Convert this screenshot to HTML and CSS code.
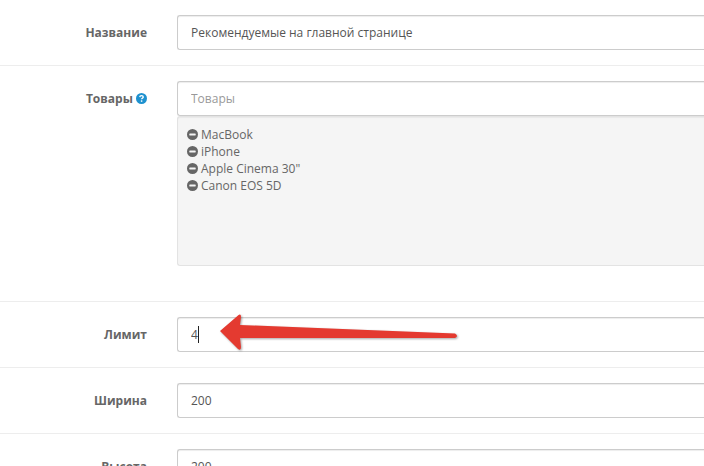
FILE: index.html
```html
<!DOCTYPE html>
<html lang="ru">
<head>
<meta charset="UTF-8">
<meta name="viewport" content="width=device-width, initial-scale=1.0">
<title>Рекомендуемые</title>
<link rel="stylesheet" href="styles.css">
</head>
<body>
<svg class="sprite" aria-hidden="true">
  <symbol id="minus" viewBox="0 0 12 12">
    <circle cx="6" cy="6" r="6" fill="currentColor"/>
    <rect x="2.5" y="4.9" width="7" height="2.2" rx="0.5" fill="#f5f5f5"/>
  </symbol>
</svg>
<form class="form">
  <div class="form-group">
    <label class="control-label" for="name">Название</label>
    <div class="field">
      <input class="form-control" type="text" id="name" name="name" value="Рекомендуемые на главной странице">
    </div>
  </div>
  <div class="form-group">
    <label class="control-label" for="product">Товары
      <svg class="help" viewBox="0 0 12 12" aria-hidden="true">
        <circle cx="6" cy="6" r="6" fill="#1e91cf"/>
        <path d="M4.1 4.5C4.2 3.3 5 2.8 6 2.8c1.100 0 1.900.6 1.900 1.600 0 1.300-1.800 1.300-1.800 2.500" fill="none" stroke="#fff" stroke-width="1.500"/>
        <rect x="5.300" y="8" width="1.600" height="1.600" fill="#fff"/>
      </svg>
    </label>
    <div class="field">
      <input class="form-control" type="text" id="product" name="product" placeholder="Товары">
      <div class="well">
        <div class="item"><svg class="icon"><use href="#minus"/></svg>MacBook</div>
        <div class="item"><svg class="icon"><use href="#minus"/></svg>iPhone</div>
        <div class="item"><svg class="icon"><use href="#minus"/></svg>Apple Cinema 30"</div>
        <div class="item"><svg class="icon"><use href="#minus"/></svg>Canon EOS 5D</div>
      </div>
    </div>
  </div>
  <div class="form-group">
    <label class="control-label" for="limit">Лимит</label>
    <div class="field">
      <input class="form-control" type="text" id="limit" name="limit" value="4">
      <span class="caret"></span>
      <svg class="arrow" viewBox="0 0 244 44" aria-hidden="true">
        <path d="M4 18 22 2.500Q25 0 25 4L24 12 239 20.500Q243 23 239 25H24L25 34Q25 38 22 36Z" fill="#e43a30"/>
      </svg>
    </div>
  </div>
  <div class="form-group">
    <label class="control-label" for="width">Ширина</label>
    <div class="field">
      <input class="form-control" type="text" id="width" name="width" value="200">
    </div>
  </div>
  <div class="form-group">
    <label class="control-label" for="height">Высота</label>
    <div class="field">
      <input class="form-control" type="text" id="height" name="height" value="200">
    </div>
  </div>
</form>
</body>
</html>
```
FILE: styles.css
```css
* {
  box-sizing: border-box;
}

body {
  margin: 0;
  height: 100vh;
  overflow: hidden;
  background-color: #fff;
  font-family: "Open Sans", "Noto Sans", sans-serif;
  font-size: 12px;
  line-height: 17px;
  color: #666;
}

.sprite {
  display: none;
}

.form-group {
  display: grid;
  grid-template-columns: 162px 1fr;
  padding: 15px 0;
}

.form-group + .form-group {
  border-top: 1px solid #ededed;
}

.control-label {
  padding: 9px 15px 0;
  text-align: right;
  font-weight: bold;
}

.help {
  width: 11px;
  height: 11px;
  vertical-align: -1px;
}

.field {
  position: relative;
  padding-left: 15px;
}

.form-control {
  display: block;
  width: 100%;
  height: 35px;
  padding: 8px 13px;
  border: 1px solid #ccc;
  border-right: none;
  border-radius: 3px 0 0 3px;
  background-color: #fff;
  box-shadow: inset 0 1px 1px rgba(0, 0, 0, 0.075);
  font-family: inherit;
  font-size: 12px;
  line-height: 17px;
  color: #555;
  outline: none;
}

.form-control::placeholder {
  color: #999;
  opacity: 1;
}

.well {
  height: 150px;
  margin-bottom: 20px;
  padding: 9px;
  border: 1px solid #e3e3e3;
  border-right: none;
  border-radius: 3px 0 0 3px;
  background-color: #f5f5f5;
  box-shadow: inset 0 1px 1px rgba(0, 0, 0, 0.05);
}

.item {
  display: flex;
  align-items: center;
  gap: 3px;
}

.icon {
  width: 11px;
  height: 11px;
}

.caret {
  position: absolute;
  top: 9px;
  left: 36px;
  width: 1px;
  height: 17px;
  background-color: #222;
}

.arrow {
  position: absolute;
  top: -4px;
  left: 54px;
  width: 244px;
  height: 44px;
  filter: drop-shadow(1px 1px 1px rgba(0, 0, 0, 0.35));
}
```
